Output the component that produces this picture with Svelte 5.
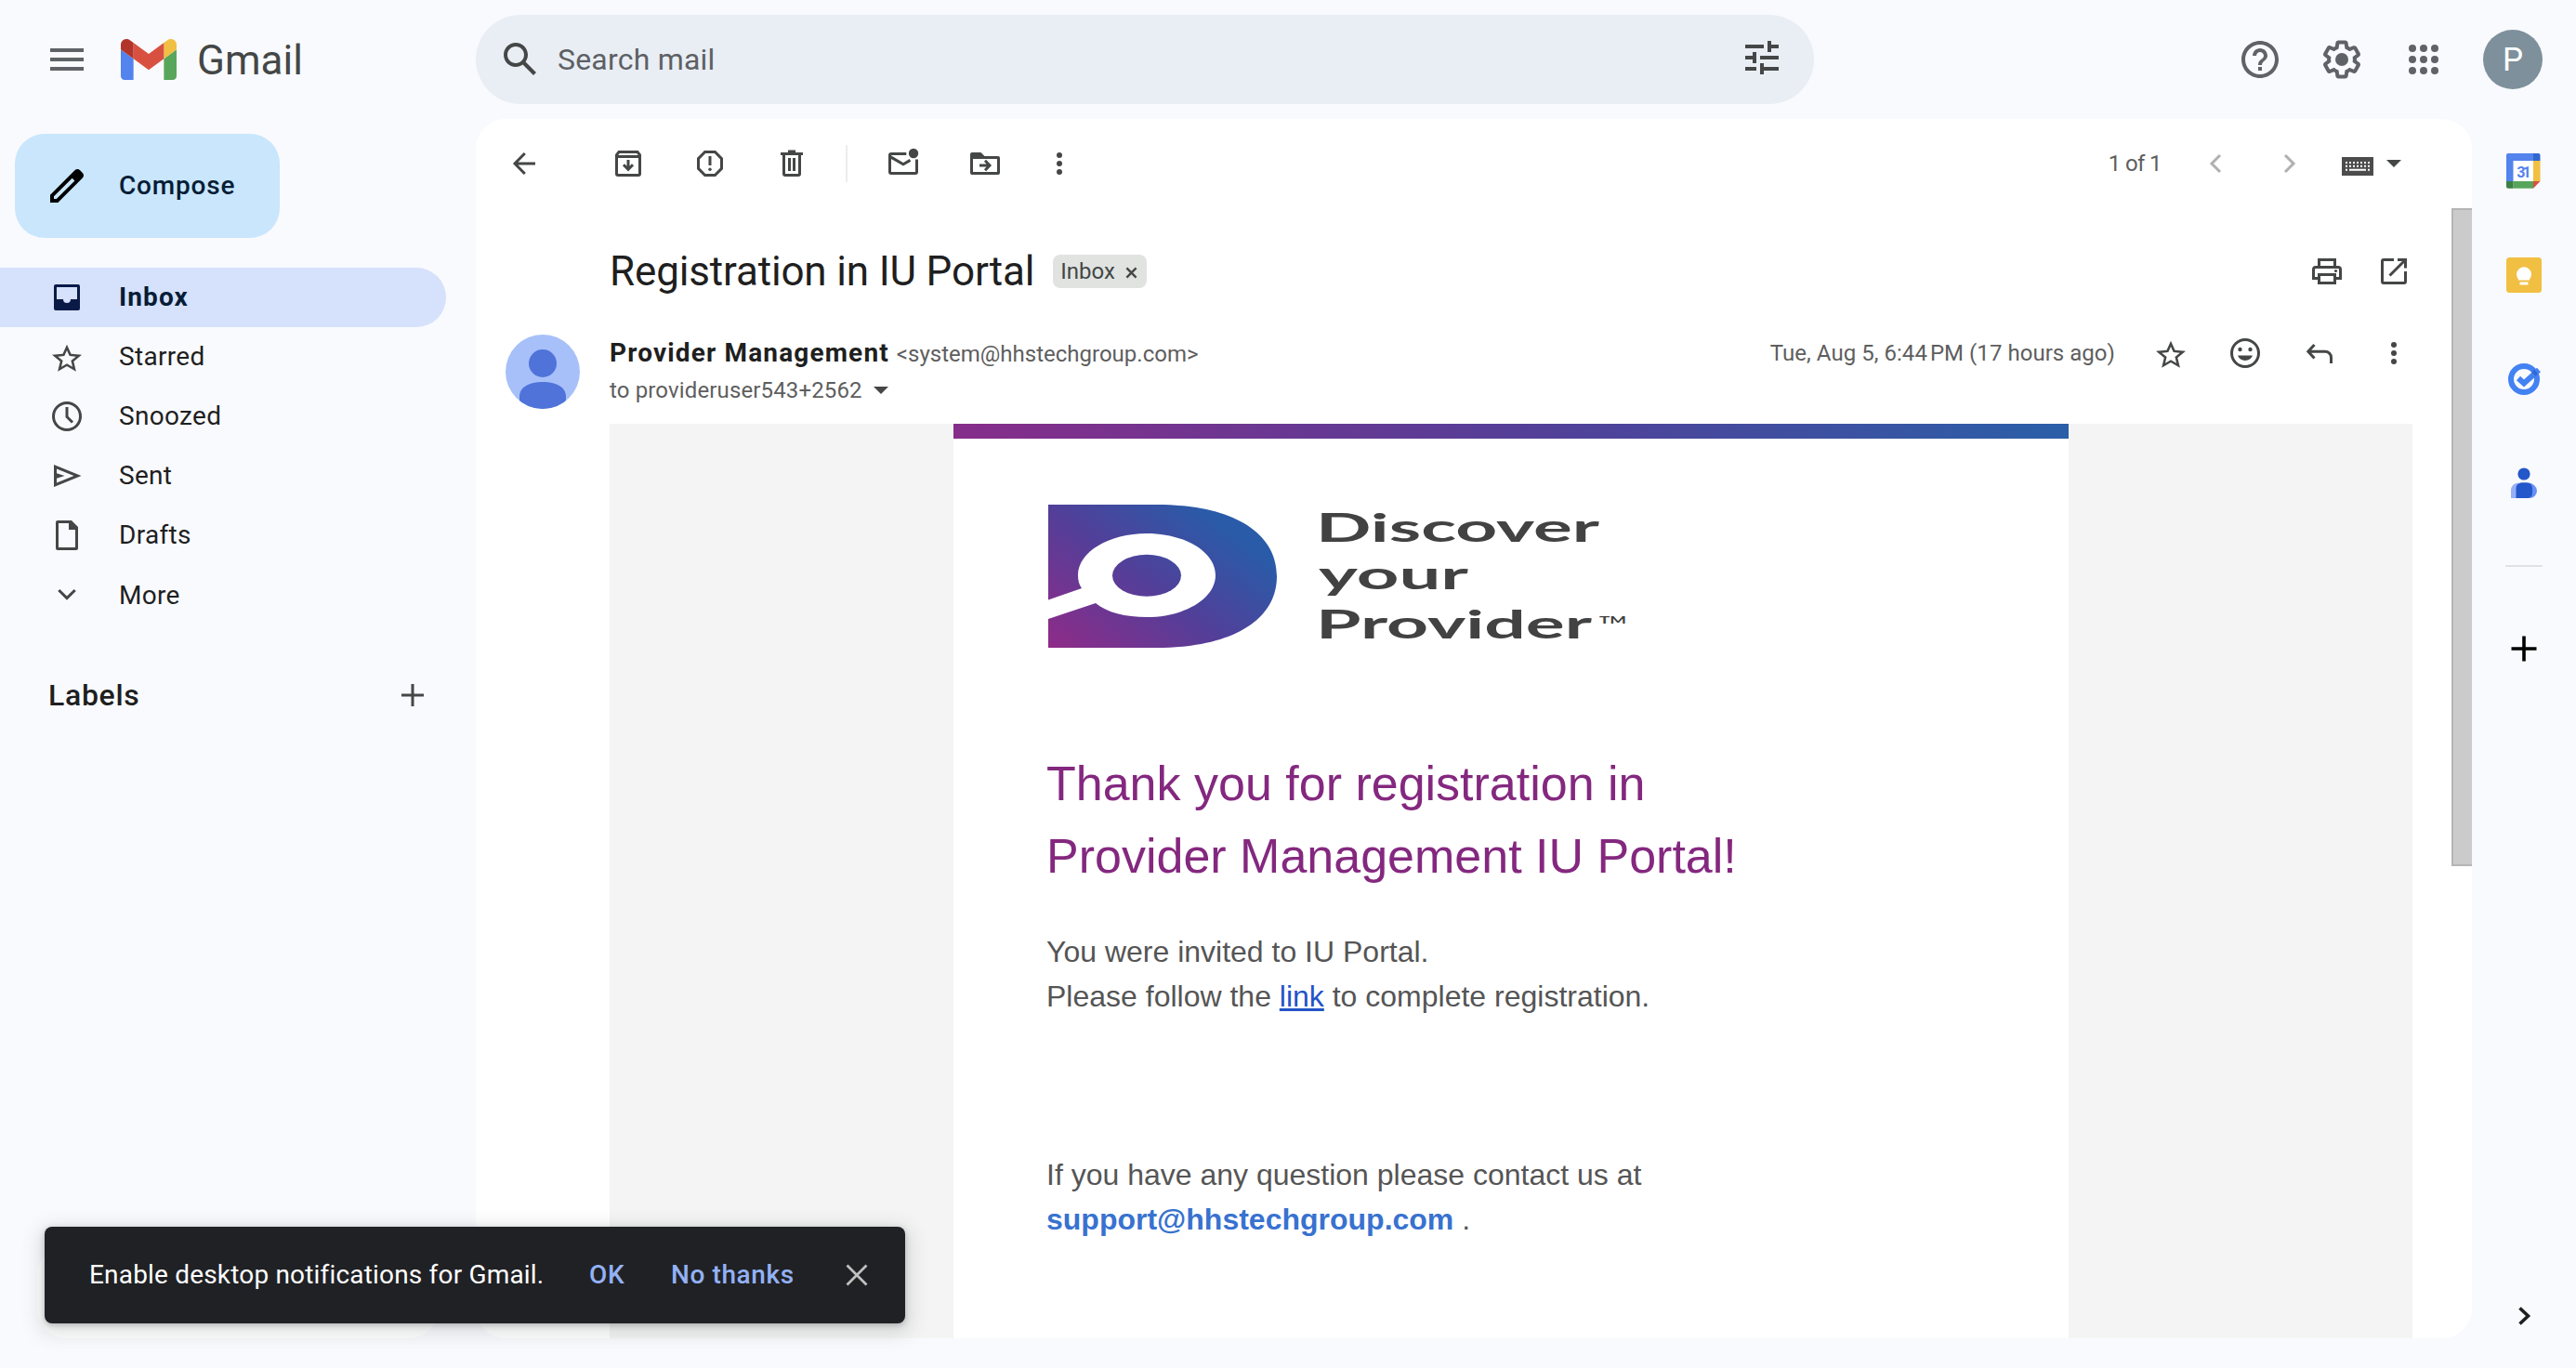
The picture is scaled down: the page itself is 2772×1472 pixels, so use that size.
<script>
  const icons = {
    menu: '<path fill="currentColor" d="M6 12h36v4H6zM6 22h36v4H6zM6 32h36v4H6z"/>',
    search:
      '<path transform="scale(2)" fill="currentColor" d="M20.49,19l-5.73-5.73C15.53,12.2,16,10.91,16,9.5C16,5.91,13.09,3,9.5,3S3,5.91,3,9.5C3,13.09,5.91,16,9.5,16c1.41,0,2.7-0.47,3.77-1.24L19,20.49L20.49,19z M5,9.5C5,7.01,7.01,5,9.5,5S14,7.01,14,9.5S11.99,14,9.5,14S5,11.99,5,9.5z"/>',
    tune: '<path transform="scale(2)" fill="currentColor" d="M3 17v2h6v-2H3zM3 5v2h10V5H3zm10 16v-2h8v-2h-8v-2h-2v6h2zM7 9v2H3v2h4v2h2V9H7zm14 4v-2H11v2h10zm-6-4h2V7h4V5h-4V3h-2v6z"/>',
    help: '<path transform="scale(2)" fill="currentColor" d="M11 18h2v-2h-2v2zm1-16C6.48 2 2 6.48 2 12s4.48 10 10 10 10-4.48 10-10S17.52 2 12 2zm0 18c-4.41 0-8-3.59-8-8s3.59-8 8-8 8 3.59 8 8-3.59 8-8 8zm0-14c-2.21 0-4 1.79-4 4h2c0-1.1.9-2 2-2s2 .9 2 2c0 2-3 1.75-3 5h2c0-2.25 3-2.5 3-5 0-2.21-1.79-4-4-4z"/>',
    settings:
      '<g transform="scale(2)" fill="currentColor"><path d="M13.85 22.25h-3.7c-.74 0-1.36-.54-1.45-1.27l-.27-1.89c-.27-.14-.53-.29-.79-.46l-1.8.72c-.7.26-1.47-.03-1.81-.65L2.2 15.53c-.35-.66-.2-1.44.36-1.88l1.53-1.19c-.01-.15-.02-.3-.02-.46 0-.15.01-.31.02-.46l-1.52-1.19c-.59-.45-.74-1.26-.37-1.88l1.85-3.19c.34-.62 1.11-.9 1.79-.63l1.81.73c.26-.17.52-.32.78-.46l.27-1.91c.09-.7.71-1.25 1.44-1.25h3.7c.74 0 1.36.54 1.45 1.27l.27 1.89c.27.14.53.29.79.46l1.8-.72c.71-.26 1.48.03 1.82.65l1.84 3.18c.36.66.2 1.44-.36 1.88l-1.52 1.19c.01.15.02.3.02.46s-.01.31-.02.46l1.52 1.19c.56.45.72 1.23.37 1.86l-1.86 3.22c-.34.62-1.11.9-1.8.63l-1.8-.72c-.26.17-.52.32-.78.46l-.27 1.91c-.1.68-.72 1.22-1.46 1.22zm-3.23-2h2.76l.37-2.55.53-.22c.44-.18.88-.44 1.34-.78l.45-.34 2.38.96 1.38-2.4-2.03-1.58.07-.56c.03-.26.06-.51.06-.78s-.03-.53-.06-.78l-.07-.56 2.03-1.58-1.39-2.4-2.39.96-.45-.35c-.42-.32-.87-.58-1.33-.77l-.52-.22-.37-2.55h-2.76l-.37 2.55-.53.21c-.44.19-.88.44-1.34.79l-.45.33-2.38-.95-1.39 2.39 2.03 1.58-.07.56a7 7 0 0 0-.06.79c0 .26.02.53.06.78l.07.56-2.03 1.58 1.38 2.4 2.39-.96.45.35c.43.33.86.58 1.33.77l.53.22.38 2.55z"/><circle cx="12" cy="12" r="3.5"/></g>',
    apps: [12, 24, 36].map((y) => [12, 24, 36].map((x) => `<circle cx="${x}" cy="${y}" r="4" fill="currentColor"/>`).join('')).join(''),
    pencil:
      '<path transform="scale(2)" fill="currentColor" d="M20.41 4.94l-1.35-1.35c-.78-.78-2.05-.78-2.83 0L3 16.82V21h4.18L20.41 7.77c.79-.78.79-2.05 0-2.83zm-14 14.12L5 19v-1.36l9.82-9.82 1.41 1.41-9.82 9.83z"/>',
    inbox: '<path fill="currentColor" stroke="none" fill-rule="evenodd" d="M8 6H32a2 2 0 0 1 2 2V32a2 2 0 0 1-2 2H8a2 2 0 0 1-2-2V8a2 2 0 0 1 2-2ZM9 9V22H16a4 4 0 0 0 8 0H31V9Z"/>',
    star: '<path transform="translate(0.8 3.6) scale(1.6 1.53)" fill="currentColor" stroke="none" fill-rule="evenodd" d="M22 9.24l-7.19-.62L12 2 9.19 8.63 2 9.24l5.46 4.73L5.82 21 12 17.27 18.18 21l-1.63-7.03L22 9.24zM12 15.4l-3.76 2.27 1-4.28-3.32-2.88 4.38-.38L12 6.1l1.71 4.04 4.38.38-3.32 2.88 1 4.28L12 15.4z"/>',
    clock: '<circle cx="20" cy="20" r="14.5"/><path d="M20 10V20.5L26 26.5"/>',
    sent: '<path fill="currentColor" stroke="none" fill-rule="evenodd" d="M6 8L35.5 20L6 32ZM9 12.5V17.3L17.5 20L9 22.7V27.5L27.5 20Z"/>',
    draft: '<path fill="currentColor" stroke="none" fill-rule="evenodd" d="M10 4H25L32 11V34a2 2 0 0 1-2 2H10a2 2 0 0 1-2-2V6a2 2 0 0 1 2-2ZM11 7V33H29V14H22V7Z"/>',
    down: '<path d="M11.3 15L20 23.6L28.7 15"/>',
    plus: '<path d="M20 8V32M8 20H32"/>',
    back: '<path d="M32 20H10.5M20.8 9L10 20L20.8 31"/>',
    archive: '<path d="M7.5 12V31a1.5 1.5 0 0 0 1.5 1.5H31a1.5 1.5 0 0 0 1.5-1.5V12M7.5 12.5H32.5M7.5 13V10.8L10 7.5H30L32.5 10.8V13M20 16V26M15 21.3L20 26.3L25 21.3"/>',
    spam: '<path d="M14.6 7.5H25.4L32.5 14.6V25.4L25.4 32.5H14.6L7.5 25.4V14.6Z M20 12V22"/><circle cx="20" cy="26.2" r="1.7" fill="currentColor" stroke="none"/>',
    trash: '<path d="M8 9.5H32M16 7H24M11.5 10V31a1.5 1.5 0 0 0 1.5 1.5H27a1.5 1.5 0 0 0 1.5-1.5V10M17.5 14V28M22.5 14V28"/>',
    unread: '<path d="M23.3 9.5H7a1.5 1.5 0 0 0-1.5 1.5V29a1.5 1.5 0 0 0 1.5 1.5H33a1.5 1.5 0 0 0 1.5-1.5V15.6M6 12.6L20 20.8L27.5 16.4"/><circle cx="31" cy="9" r="5.2" fill="currentColor" stroke="none"/>',
    move: '<path fill="currentColor" stroke="none" fill-rule="evenodd" d="M4 10a2 2 0 0 1 2-2H15.5L19.5 12H34a2 2 0 0 1 2 2V30a2 2 0 0 1-2 2H6a2 2 0 0 1-2-2ZM7 15V29H33V15Z"/><path d="M14 22H24.5M20 16.8L25 22L20 27.2"/>',
    dots: '<g fill="currentColor" stroke="none"><circle cx="20" cy="11" r="3"/><circle cx="20" cy="20" r="3"/><circle cx="20" cy="29" r="3"/></g>',
    prev: '<path d="M25 11L16 20L25 29"/>',
    next: '<path d="M15 11L24 20L15 29"/>',
    print: '<path d="M11.5 14V7.5H28.5V14M11 27.5H5.5V18a2.5 2.5 0 0 1 2.5-2.5H32a2.5 2.5 0 0 1 2.5 2.5V27.5H29M11.5 23.5H28.5V32.5H11.5Z"/><circle cx="29.5" cy="19.5" r="1.6" fill="currentColor" stroke="none"/>',
    open: '<path d="M20 7.5H9A1.5 1.5 0 0 0 7.5 9V31A1.5 1.5 0 0 0 9 32.5H31A1.5 1.5 0 0 0 32.5 31V20M24 7.5H32.5V16.5M15.5 24.5L32 8"/>',
    smile: '<circle cx="20" cy="20" r="14.5"/><g fill="currentColor" stroke="none"><circle cx="14.5" cy="16" r="2.2"/><circle cx="25.5" cy="16" r="2.2"/><path d="M12 22.5H28A8.6 8.6 0 0 1 12 22.5Z"/></g>',
    reply: '<path d="M14.5 11L7.8 18.2L14.5 25.4M8 18.2H26A6.5 6.5 0 0 1 32.5 24.7V31"/>'
  };

  const nav = [
    { icon: 'inbox', label: 'Inbox', active: true },
    { icon: 'star', label: 'Starred' },
    { icon: 'clock', label: 'Snoozed' },
    { icon: 'sent', label: 'Sent' },
    { icon: 'draft', label: 'Drafts' },
    { icon: 'down', label: 'More' }
  ];
</script>

{#snippet icon(name)}
  <svg class="icon" viewBox="0 0 40 40" fill="none" stroke="currentColor" stroke-width="3">{@html icons[name]}</svg>
{/snippet}
{#snippet big(name)}
  <svg class="big-icon i-{name}" viewBox="0 0 48 48">{@html icons[name]}</svg>
{/snippet}

<div class="app">
  <header>
    <div class="brand">
      {@render big('menu')}
      <svg class="gmail-mark" viewBox="52 42 88 66" preserveAspectRatio="none">
        <path fill="#5383ec" d="M58 108h14V74L52 59v43c0 3.32 2.69 6 6 6" />
        <path fill="#58a65c" d="M120 108h14c3.32 0 6-2.69 6-6V59l-20 15" />
        <path fill="#f1bf42" d="M120 48v26l20-15v-8c0-7.42-8.47-11.65-14.4-7.2" />
        <path fill="#d85140" d="M72 74V48l24 18 24-18v26L96 92" />
        <path fill="#b33529" d="M52 51v8l20 15V48l-5.6-4.2c-5.94-4.45-14.4-.22-14.4 7.2" />
      </svg>
      <span class="wordmark">Gmail</span>
    </div>
    <div class="searchbar">
      {@render big('search')}
      <span class="placeholder">Search mail</span>
      {@render big('tune')}
    </div>
    <div class="account">
      {@render big('help')}
      {@render big('settings')}
      {@render big('apps')}
      <div class="user">P</div>
    </div>
  </header>

  <div class="body">
    <aside>
      <button class="compose">{@render big('pencil')}<span>Compose</span></button>
      <nav>
        {#each nav as item}
          <div class="nav-item" class:active={item.active}>{@render icon(item.icon)}<span>{item.label}</span></div>
        {/each}
      </nav>
      <div class="labels"><span>Labels</span>{@render icon('plus')}</div>
      <div class="storage-card"></div>
    </aside>

    <main>
      <div class="toolbar">
        {@render icon('back')}
        <div class="group first">{@render icon('archive')}{@render icon('spam')}{@render icon('trash')}</div>
        <i class="divider"></i>
        <div class="group">{@render icon('unread')}{@render icon('move')}</div>
        <div class="overflow">{@render icon('dots')}</div>
        <div class="pager">
          <span class="count">1 of 1</span>
          {@render icon('prev')}
          {@render icon('next')}
          <svg class="keyboard" viewBox="0 0 34 20">
            <rect width="34" height="20" fill="#4c4c4c" />
            <path d="M4 6H30M4 9.8H30" stroke="#fff" stroke-width="2" stroke-dasharray="2 2" />
            <path d="M4 13.8H6M8 13.8H26M28 13.8H30" stroke="#fff" stroke-width="2" />
          </svg>
          <svg class="caret" viewBox="0 0 16 8"><path fill="#444746" d="M0 0H16L8 8Z" /></svg>
        </div>
      </div>

      <div class="subject-row">
        <h1>Registration in IU Portal</h1>
        <div class="chip"><span>Inbox</span><svg viewBox="0 0 14 14"><path d="M1.5 1.5L12.5 12.5M12.5 1.5L1.5 12.5" stroke="#444746" stroke-width="2.6" /></svg></div>
        <div class="subject-actions">{@render icon('print')}{@render icon('open')}</div>
      </div>

      <div class="sender-row">
        <svg class="sender-avatar" viewBox="0 0 80 80">
          <defs><clipPath id="face"><circle cx="40" cy="40" r="40" /></clipPath></defs>
          <g clip-path="url(#face)">
            <rect width="80" height="80" fill="#a7c0fa" />
            <circle cx="40" cy="31" r="15" fill="#4f73d9" />
            <path fill="#4f73d9" d="M15 80V67C15 56 26 51 40 51S65 56 65 67V80Z" />
          </g>
        </svg>
        <div class="sender">
          <div class="from"><b>Provider Management</b><span class="addr">&lt;system@hhstechgroup.com&gt;</span></div>
          <div class="to"><span>to provideruser543+2562</span><svg class="caret" viewBox="0 0 16 8"><path fill="#444746" d="M0 0H16L8 8Z" /></svg></div>
        </div>
        <div class="meta">
          <span class="date">Tue, Aug 5, 6:44&#8239;PM (17 hours ago)</span>
          {@render icon('star')}{@render icon('smile')}{@render icon('reply')}{@render icon('dots')}
        </div>
      </div>

      <div class="message">
        <article>
          <div class="stripe"></div>
          <svg class="logo" viewBox="0 0 640 154">
            <defs>
              <linearGradient id="brand" gradientUnits="userSpaceOnUse" x1="0" y1="154" x2="149" y2="-39">
                <stop offset="0" stop-color="#902b88" />
                <stop offset="0.5" stop-color="#523f99" />
                <stop offset="0.9" stop-color="#2a5ba8" />
              </linearGradient>
            </defs>
            <path fill="url(#brand)" d="M1 0H118C196 0 247 28 247 77S196 154 118 154H1V123L52 106C64 116 84 121 107 121C148 121 181 101 181 76S148 31 107 31S33 51 33 76C33 81 34 86 37 90L1 102.500Z" />
            <ellipse cx="107" cy="76.300" rx="37" ry="22.500" fill="url(#brand)" />
            <g class="logo-text">
              <text x="289" y="39.500" textLength="305" lengthAdjust="spacingAndGlyphs">Discover</text>
              <text x="292" y="91" textLength="161" lengthAdjust="spacingAndGlyphs">your</text>
              <text x="289" y="144" textLength="297" lengthAdjust="spacingAndGlyphs">Provider</text>
              <text class="tm" x="594" y="128" textLength="29" lengthAdjust="spacingAndGlyphs">TM</text>
            </g>
          </svg>
          <h2>Thank you for registration in<br />Provider Management IU Portal!</h2>
          <p>You were invited to IU Portal.<br />Please follow the <a href="#link">link</a> to complete registration.</p>
          <p class="contact">If you have any question please contact us at<br /><b>support@hhstechgroup.com</b> .</p>
        </article>
      </div>
      <div class="scrollbar"></div>
    </main>

    <div class="rail">
      <svg viewBox="0 0 40 40" class="app-icon">
        <path fill="#5383ec" d="M3 1H31V9H9V31H1V3a2 2 0 0 1 2-2Z" />
        <path fill="#3367d0" d="M30 1H35.500a2 2 0 0 1 2 2V9H30Z" />
        <path fill="#f1bf42" d="M30 9H37.500V31H30Z" />
        <path fill="#58a65c" d="M8.500 31H30V38.700H8.500Z" />
        <path fill="#3c8043" d="M1 31H8.500V38.700H3a2 2 0 0 1-2-2Z" />
        <path fill="#d85140" d="M30 31H37.500L30 38.700Z" />
        <path fill="#fff" d="M8.500 9H30V31H8.500Z" />
        <text x="19.900" y="26.500" text-anchor="middle" textLength="15.500" class="day">31</text>
      </svg>
      <svg viewBox="0 0 40 40" class="app-icon">
        <rect x="1" y="1" width="38" height="38" rx="3.500" fill="#f1bf42" />
        <path fill="#fff" d="M14 25.500V24.500A8 8 0 1 1 26 24.500V25.500ZM15.500 27.500H24.500V30.500H15.500Z" />
      </svg>
      <svg viewBox="0 0 40 40" class="app-icon" fill="none">
        <circle cx="20" cy="20" r="14" stroke="#4382f3" stroke-width="6" />
        <path d="M14 19L20 24.500L36 10" stroke="#4382f3" stroke-width="6" />
        <path d="M28.500 12.500L32.500 17L35 14L31 9.500Z" fill="#3567d2" />
      </svg>
      <svg viewBox="0 0 40 40" class="app-icon">
        <circle cx="20" cy="10" r="6.600" fill="#2457c9" />
        <path fill="#96aff7" d="M6 36V28a8 8 0 0 1 8-8.500V36Z" />
        <path fill="#688ff6" d="M24 19.500a10 9 0 0 1 10 8.500a8 8 0 0 1-8 8H20Z" />
        <path fill="#2457c9" d="M11.500 36V25a6 6 0 0 1 6-5.700H23a6 6 0 0 1 6 6V31a5 5 0 0 1-5 5Z" />
      </svg>
      <i class="rule"></i>
      <svg viewBox="0 0 40 40" class="app-icon"><path d="M20 6.500V33.500M6.500 20H33.500" stroke="#000" stroke-width="3.600" /></svg>
      <svg viewBox="0 0 40 40" class="app-icon collapse"><path d="M15.500 11.500L24.500 20L15.500 28.500" fill="none" stroke="#1f1f1f" stroke-width="3.600" /></svg>
    </div>
  </div>

  <div class="toast">
    <span class="toast-text">Enable desktop notifications for Gmail.</span>
    <span class="ok">OK</span>
    <span class="no">No thanks</span>
    <svg viewBox="0 0 24 24"><path d="M1.500 1.500L22.500 22.500M22.500 1.500L1.500 22.500" stroke="#c0c0c0" stroke-width="2.800" /></svg>
  </div>
</div>

<style>
  :global(body) { margin: 0; }
  .app {
    position: relative;
    display: flex;
    flex-direction: column;
    width: 2772px;
    height: 1472px;
    overflow: hidden;
    background: #f9fafe;
    color: #1f1f1f;
    font-family: Roboto, 'Liberation Sans', sans-serif;
    font-size: 28px;
  }
  .app * { box-sizing: border-box; }
  svg { display: block; flex: none; }
  span, b, h1 { white-space: nowrap; }
  .icon { width: 40px; height: 40px; color: #444746; }
  .big-icon { width: 48px; height: 48px; color: #5f6368; }

  header { display: flex; height: 128px; flex: none; }
  .brand { display: flex; align-items: center; width: 512px; padding-left: 48px; }
  .gmail-mark { width: 60px; height: 44px; margin-left: 34px; }
  .wordmark { margin-left: 22px; padding-top: 2px; font-size: 44px; line-height: 52px; color: #444746; }
  .searchbar { display: flex; align-items: center; gap: 16px; width: 1440px; height: 96px; margin-top: 16px; padding: 0 32px 0 24px; border-radius: 48px; background: #e9eef5; }
  .searchbar .big-icon { color: #444746; }
  .searchbar .i-tune { margin: 0 0 4px auto; }
  .placeholder { padding-bottom: 1px; font-size: 32px; line-height: 40px; letter-spacing: 0.2px; color: #5e6063; }
  .account { display: flex; align-items: center; gap: 40px; margin-left: auto; padding-right: 36px; }
  .user { width: 64px; height: 64px; border-radius: 50%; background: #7d909b; color: #fff; font-size: 35px; line-height: 66px; text-align: center; }

  .body { display: flex; height: 1312px; }
  aside { width: 512px; flex: none; position: relative; }
  .compose { display: flex; align-items: center; gap: 32px; width: 285px; height: 112px; margin: 16px 0 0 16px; padding: 0 0 0 32px; border: 0; border-radius: 32px; background: #c9e6fc; color: #061d36; font: 500 28px/36px Roboto, sans-serif; letter-spacing: 0.8px; }
  .compose .big-icon { color: #000; }
  nav { margin-top: 32px; }
  .nav-item { display: flex; align-items: center; gap: 36px; width: 480px; height: 64px; padding-left: 52px; letter-spacing: 0.3px; }
  .nav-item span { padding-bottom: 1px; }
  .nav-item:last-child span { padding-bottom: 0; }
  .nav-item.active { border-radius: 0 32px 32px 0; background: #d6e1fb; color: #061d36; font-weight: 700; letter-spacing: 1.1px; }
  .active .icon { color: #0a1a47; }
  .labels { display: flex; align-items: center; justify-content: space-between; height: 64px; margin-top: 44px; padding: 0 48px 0 52px; font-size: 32px; font-weight: 500; letter-spacing: 0.7px; }
  .storage-card { position: absolute; left: 40px; bottom: 0; width: 432px; height: 100px; border-radius: 32px; background: #fff; }

  main { position: relative; width: 2148px; height: 1312px; border-radius: 32px; background: #fff; overflow: hidden; flex: none; }
  .toolbar { display: flex; align-items: center; height: 96px; padding: 0 76px 0 32px; }
  .group { display: flex; gap: 48px; }
  .group.first { margin-left: 72px; }
  .divider { width: 2px; height: 40px; margin: 0 40px 0 38px; background: #ececec; }
  .overflow { margin-left: 40px; }
  .pager { display: flex; align-items: center; margin-left: auto; }
  .pager .icon { color: #b0b0b0; margin-right: 40px; }
  .pager .icon + .icon { margin-right: 36px; }
  .count { margin-right: 38px; font-size: 24px; line-height: 32px; letter-spacing: -0.6px; color: #5e5e5e; }
  .keyboard { width: 34px; height: 20px; margin-top: 6px; }
  .pager .caret { margin-left: 14px; }
  .caret { width: 16px; height: 8px; }

  .subject-row { display: flex; align-items: center; height: 72px; margin: 32px 64px 0 144px; }
  h1 { margin: 0; font-size: 44px; font-weight: 400; line-height: 56px; letter-spacing: -0.16px; }
  .chip { display: flex; align-items: center; gap: 11px; width: 101px; height: 36px; margin-left: 20px; padding-left: 8px; border-radius: 8px; background: #e1e3e1; color: #444746; font-size: 24px; line-height: 36px; }
  .chip svg { width: 13px; height: 13px; margin-top: 2px; }
  .subject-actions { display: flex; gap: 32px; margin-left: auto; }

  .sender-row { display: flex; height: 80px; margin: 32px 64px 0 32px; }
  .sender-avatar { width: 80px; height: 80px; }
  .sender { margin-left: 32px; }
  .from { display: flex; align-items: baseline; gap: 8px; height: 40px; line-height: 40px; }
  .from b { font-weight: 700; letter-spacing: 1.15px; }
  .addr, .to, .date { font-size: 24px; color: #5e5e5e; }
  .to { display: flex; align-items: center; gap: 12px; height: 40px; line-height: 40px; letter-spacing: 0.14px; }
  .meta { display: flex; align-items: center; gap: 40px; height: 40px; margin-left: auto; }
  .date { letter-spacing: 0.04px; }

  .message { width: 1940px; height: 984px; margin: 16px 0 0 144px; padding-left: 370px; background: #f4f4f4; }
  article { width: 1200px; height: 984px; background: #fff; font-family: 'Liberation Sans', Arial, sans-serif; color: #555; }
  .stripe { height: 16px; background: linear-gradient(90deg, #862d8a, #533f98 52%, #2a5fa8); }
  .logo { width: 640px; height: 154px; margin: 71px 0 0 101px; overflow: visible; }
  .logo-text { font: 700 42px Lato, sans-serif; fill: #424242; }
  .logo-text .tm { font-size: 12px; }
  h2 { margin: 107px 0 0 100px; font-size: 52px; font-weight: 400; line-height: 78px; color: #84287f; }
  p { margin: 40px 0 0 100px; font-size: 32px; line-height: 48px; }
  p.contact { margin-top: 144px; }
  p a { color: #2353c7; text-decoration-thickness: 3px; }
  p b { color: #3872d0; }
  .scrollbar { position: absolute; top: 96px; right: 0; width: 22px; height: 708px; border: 2px solid #b5b5b5; border-right: 0; background: #cbcbcb; }

  .rail { display: flex; flex-direction: column; align-items: center; width: 112px; height: 1312px; padding-top: 36px; }
  .app-icon { width: 40px; height: 40px; margin-bottom: 72px; }
  .day { font: 700 16px Roboto, sans-serif; fill: #5383ec; }
  .rule { width: 40px; height: 2px; margin: -4px 0 68px; background: #e0e1e3; }
  .app-icon.collapse { margin: auto 0 4px; }

  .toast { position: absolute; left: 48px; top: 1320px; display: flex; align-items: center; width: 926px; height: 104px; padding: 0 0 2px 48px; border-radius: 8px; background: #202124; color: #fff; box-shadow: 0 2px 6px rgba(60, 64, 67, 0.3), 0 6px 20px 6px rgba(60, 64, 67, 0.15); }
  .toast-text { width: 489px; letter-spacing: 0.18px; }
  .toast .ok, .toast .no { color: #93b1f5; font-weight: 500; }
  .toast .ok { width: 40px; margin-left: 49px; letter-spacing: 0.7px; }
  .toast .no { margin-left: 48px; letter-spacing: 0.6px; }
  .toast svg { width: 24px; height: 24px; margin: 2px 40px 0 auto; }
</style>
